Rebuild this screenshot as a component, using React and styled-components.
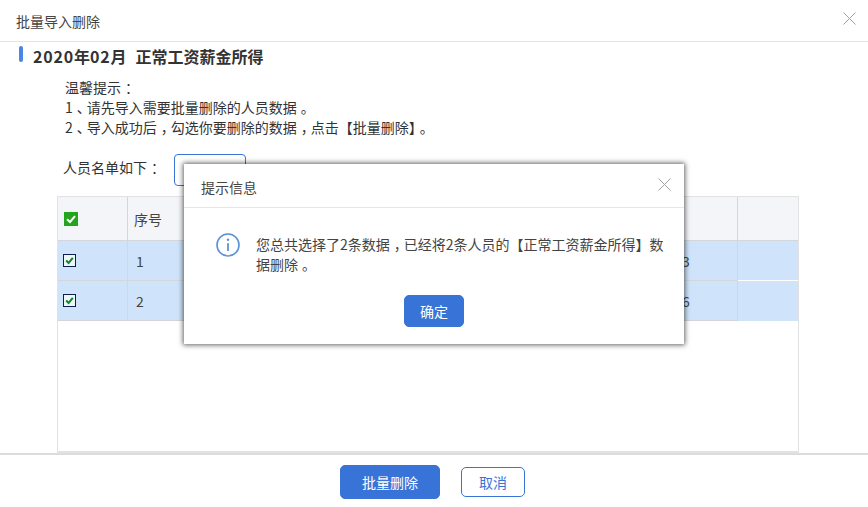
import * as React from 'react';
import styled, { createGlobalStyle } from 'styled-components';

const GlobalStyle = createGlobalStyle`
  html, body {
    margin: 0;
    padding: 0;
    background: #fff;
  }
  * {
    box-sizing: border-box;
  }
`;

const Page = styled.div`
  position: relative;
  width: 868px;
  height: 507px;
  overflow: hidden;
  background: #fff;
  color: #333;
  font-family: "Noto Sans CJK SC", "Liberation Sans", sans-serif;
  font-size: 14px;
  display: flex;
  flex-direction: column;
`;

// half-width punctuation padded back to a full cell, so that it sits near the centre
const P = styled.span`
  font-feature-settings: "halt";
  padding: 0 3px 0 4px;
`;

const TopBar = styled.div`
  height: 42px;
  flex: none;
  padding: 0 12px 0 16px;
  display: flex;
  align-items: center;
  justify-content: space-between;
  border-bottom: 1px solid #e4e4e4;
  color: #444;
`;

const SectionTitle = styled.div`
  margin-left: 19px;
  height: 28px;
  flex: none;
  display: flex;
  align-items: center;
  font-size: 16px;
  font-weight: 700;
  color: #333;

  &:before {
    content: '';
    width: 4px;
    height: 16px;
    margin: -4px 10px 0 0;
    border-radius: 2px;
    background: #4a86e8;
  }
`;

const Digits = styled.span`
  letter-spacing: 0.8px;
`;

const TitleName = styled.span`
  margin-left: 9px;
`;

const Tips = styled.div`
  margin: 7px 0 0 65px;
  line-height: 20px;
  color: #333;
`;

const ListRow = styled.div`
  margin: 17px 0 0 63px;
  height: 32px;
  flex: none;
  display: flex;
  gap: 13px;
  line-height: 26px;
  color: #333;
`;

const ImportButton = styled.div`
  width: 72px;
  height: 32px;
  border: 1px solid #3874d8;
  border-radius: 4px;
`;

const Table = styled.div`
  margin: 10px 0 0 57px;
  width: 742px;
  height: 257px;
  flex: none;
  border: 1px solid #e2e2e2;
  border-bottom-width: 2px;
`;

const Row = styled.div`
  display: grid;
  grid-template-columns: 70px 546px 64px 1fr;
  height: ${props => props.$height}px;
  background: ${props => (props.$header ? '#f4f5f9' : '#cfe4fa')};
`;

const Cell = styled.div`
  display: flex;
  align-items: center;
  padding-left: ${props => props.$pad || 8}px;
  border-right: ${props => (props.$last ? 'none' : '1px solid #d3d6da')};
  border-bottom: 1px solid ${props => (props.$last && props.$bright ? '#fff' : '#d3d6da')};
  color: #444;
  ${props => props.$clean && 'border-bottom: none;'}
`;

const Footer = styled.div`
  flex: 1;
  display: flex;
  align-items: center;
  justify-content: center;
  gap: 21px;
  padding: 2px 3px 0 0;
  border-top: 2px solid #dcdcdc;
`;

const Button = styled.div`
  display: flex;
  align-items: center;
  justify-content: center;
  width: ${props => props.$width}px;
  height: ${props => props.$height}px;
  border-radius: 5px;
  background: ${props => (props.$outline ? '#fff' : '#3874d8')};
  border: 1px solid #3874d8;
  color: ${props => (props.$outline ? '#3874d8' : '#fff')};
`;

const Modal = styled.div`
  position: absolute;
  left: 184px;
  top: 164px;
  width: 500px;
  height: 180px;
  background: #fff;
  box-shadow: 0 0 5px 1px rgba(0, 0, 0, 0.62);
  display: flex;
  flex-direction: column;
`;

const ModalHead = styled.div`
  height: 44px;
  flex: none;
  padding: 2px 13px 0 17px;
  display: flex;
  align-items: center;
  justify-content: space-between;
  border-bottom: 1px solid #e6e6e6;
  color: #444;
`;

const ModalBody = styled.div`
  display: flex;
  gap: 16px;
  padding: 25px 18px 0 32px;
`;

const Message = styled.div`
  line-height: 20px;
  margin-top: 1px;
  color: #444;
  white-space: nowrap;
`;

const ModalActions = styled.div`
  display: flex;
  justify-content: center;
  margin-top: 21px;
`;

const CloseShape = styled.svg`
  width: 13px;
  height: 13px;
  margin-top: -4px;
`;

const CloseIcon = () => (
  <CloseShape viewBox="0 0 13 13" fill="none" stroke="#a0a0a0" strokeWidth="1">
    <path d="M0.5 0.5 L12.5 12.5 M12.5 0.5 L0.5 12.5" />
  </CloseShape>
);

const InfoIcon = () => (
  <svg width="24" height="24" viewBox="0 0 24 24" fill="none" stroke="#5b8fdc" style={{ flex: 'none' }}>
    <circle cx="12" cy="12" r="11" strokeWidth="1.6" />
    <circle cx="12" cy="6.8" r="1.2" fill="#5b8fdc" stroke="none" />
    <path d="M12 10.2 V18" strokeWidth="1.8" />
  </svg>
);

const HeadCheck = () => (
  <svg width="14" height="14" viewBox="0 0 14 14">
    <rect width="14" height="14" fill="#22a51c" />
    <path d="M3 7.2 L6 10 L11 4.2" fill="none" stroke="#fff" strokeWidth="2" />
  </svg>
);

const RowCheck = () => (
  <svg width="13" height="13" viewBox="0 0 13 13">
    <rect x="0.5" y="0.5" width="12" height="12" fill="#eef5fb" stroke="#0c1f4f" />
    <path d="M3.2 6.5 L5.6 9 L9.8 3.8" fill="none" stroke="#0c8a1c" strokeWidth="2" />
  </svg>
);

const rows = [
  { no: '1', value: '3', bright: true },
  { no: '2', value: '6', bright: false },
];

export default function App() {
  return (
    <Page>
      <GlobalStyle />
      <TopBar>
        批量导入删除
        <CloseIcon />
      </TopBar>
      <SectionTitle>
        <span><Digits>2020</Digits>年<Digits>02</Digits>月</span>
        <TitleName>正常工资薪金所得</TitleName>
      </SectionTitle>
      <Tips>
        <div>温馨提示<P>：</P></div>
        <div>1<P>、</P>请先导入需要批量删除的人员数据<P>。</P></div>
        <div>2<P>、</P>导入成功后<P>，</P>勾选你要删除的数据<P>，</P>点击【批量删除】<P>。</P></div>
      </Tips>
      <ListRow>
        <span>人员名单如下<P>：</P></span>
        <ImportButton />
      </ListRow>
      <Table>
        <Row $header $height={44}>
          <Cell $pad={6}><HeadCheck /></Cell>
          <Cell $pad={6}>序号</Cell>
          <Cell />
          <Cell $last />
        </Row>
        {rows.map(row => (
          <Row key={row.no} $height={40}>
            <Cell $pad={5}><RowCheck /></Cell>
            <Cell>{row.no}</Cell>
            <Cell>{row.value}</Cell>
            <Cell $last $bright={row.bright} $clean={!row.bright} />
          </Row>
        ))}
      </Table>
      <Footer>
        <Button $width={100} $height={34}>批量删除</Button>
        <Button $outline $width={64} $height={30}>取消</Button>
      </Footer>
      <Modal>
        <ModalHead>
          提示信息
          <CloseIcon />
        </ModalHead>
        <ModalBody>
          <InfoIcon />
          <Message>
            <div>您总共选择了2条数据<P>，</P>已经将2条人员的【正常工资薪金所得】数</div>
            <div>据删除<P>。</P></div>
          </Message>
        </ModalBody>
        <ModalActions>
          <Button $width={60} $height={32}>确定</Button>
        </ModalActions>
      </Modal>
    </Page>
  );
}
